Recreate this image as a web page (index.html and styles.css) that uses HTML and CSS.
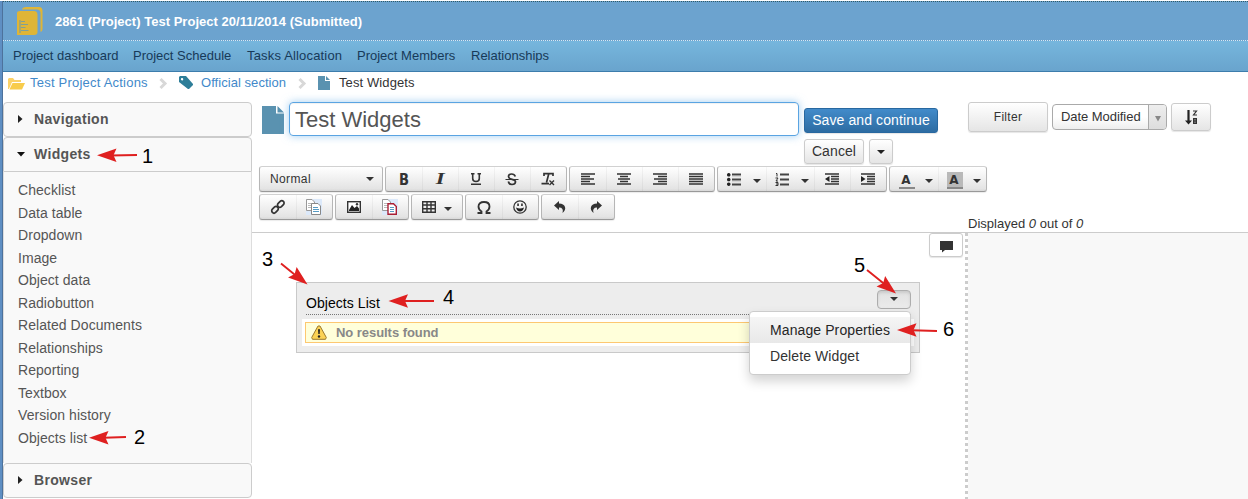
FILE: index.html
```html
<!DOCTYPE html>
<html lang="en">
<head>
<meta charset="utf-8">
<title>Test Widgets</title>
<link rel="stylesheet" href="styles.css">
</head>
<body>
<div class="app">
  <header class="header">
    <div class="titlebar">
      <svg class="book" width="26" height="29" viewBox="0 0 26 29"><path d="M5 2Q6 0 9 0H22Q25.500 0 25.500 4V22Q25.500 24.500 23.500 25V6Q23.500 2.500 20 2.500H5Z" fill="#dfb537"/><path d="M0 6Q0 4 3 4H17Q20.500 4 20.500 8V25Q20.500 28 17 28H0Z" fill="#dfb537"/><path d="M3 13V26M4 14.500H8M4 17.500H11M4 20.500H8.500M4 23.500H11.500" stroke="#7f9f98" stroke-width="1.200" fill="none"/></svg>
      <span>2861 (Project) Test Project 20/11/2014 (Submitted)</span>
    </div>
    <nav class="nav"><a>Project dashboard</a><a>Project Schedule</a><a class="tasks">Tasks Allocation</a><a>Project Members</a><a>Relationships</a></nav>
  </header>
  <div class="crumbs">
    <svg class="folder" width="17" height="13" viewBox="0 0 17 13"><path d="M0 12V2L1 1H5L6.500 3H13V5H4L1 12Z" fill="#fbd268"/><path d="M4.500 6H17L14 12.500H1.500Z" fill="#f8cc4c"/></svg>
    <a class="crumb-project">Test Project Actions</a>
    <svg class="chevron" width="9" height="11" viewBox="0 0 9 11"><path d="M1.500 1L6 5.500L1.500 10" stroke="#d8d8d8" stroke-width="3" fill="none"/></svg>
    <svg class="tag" width="15" height="14" viewBox="0 0 15 14"><path fill-rule="evenodd" d="M0 1L1 0H7L14 8V9L10 13H9L0 6ZM3 2A1.200 1.200 0 1 0 3.100 4.400A1.200 1.200 0 0 0 3 2Z" fill="#2e7e99"/></svg>
    <a class="crumb-section">Official section</a>
    <svg class="chevron second" width="9" height="11" viewBox="0 0 9 11"><path d="M1.500 1L6 5.500L1.500 10" stroke="#d8d8d8" stroke-width="3" fill="none"/></svg>
    <svg class="page" width="12" height="14" viewBox="0 0 12 14"><path d="M0 0H7V5H12V14H0ZM8 0L12 4H8Z" fill="#5a92b0"/></svg>
    <span class="crumb-current">Test Widgets</span>
  </div>
  <div class="columns">
    <aside class="sidebar">
      <div class="panel-head"><svg width="6" height="8"><path d="M0 0L4.500 4L0 8Z" fill="#222"/></svg>Navigation</div>
      <div class="panel-head open"><svg width="8" height="5"><path d="M-1 0H7L3 4.500Z" fill="#111"/></svg>Widgets</div>
      <ul class="widgets"><li>Checklist</li><li>Data table</li><li>Dropdown</li><li>Image</li><li>Object data</li><li>Radiobutton</li><li>Related Documents</li><li>Relationships</li><li>Reporting</li><li>Textbox</li><li>Version history</li><li>Objects list</li></ul>
      <div class="panel-head"><svg width="6" height="8"><path d="M0 0L4.500 4L0 8Z" fill="#222"/></svg>Browser</div>
    </aside>
    <main class="main">
      <div class="controls">
        <div class="edit-head">
          <div class="title-row">
            <svg class="doc" width="22" height="28" viewBox="0 0 22 28"><path d="M0 0H14V7.500H22V28H0ZM15.500 0L22 6.500H15.500Z" fill="#5a92b0"/></svg>
            <div class="title-input">Test Widgets</div>
            <div class="actions">
              <div class="btn save">Save and continue</div>
              <div class="btn cancel">Cancel</div>
              <div class="btn more"><svg width="8" height="4"><path d="M0 0H8L4 4Z" fill="#222"/></svg></div>
            </div>
          </div>
          <div class="toolbar">
            <div class="tool-row">
              <div class="group format"><span>Normal</span><svg width="8" height="4"><path d="M0 0H8L4 4Z" fill="#333"/></svg></div>
              <div class="group">
                <i class="tool"><b class="bold">B</b></i>
                <i class="tool"><b class="italic">I</b></i>
                <i class="tool"><svg width="12" height="13"><path d="M1 .7H4.500M7.500 .7H11M2.700 1V5.500Q2.700 8.500 6 8.500T9.300 5.500V1M1 11.200H11" stroke="#333" stroke-width="1.600" fill="none"/></svg></i>
                <i class="tool"><svg width="14" height="13"><path d="M10.300 3.500Q9.500 1 6.500 1Q3.500 1 3.500 3.500Q3.500 5.500 7 6.300Q10.700 7.200 10.500 9Q10.200 11.500 7 11.500Q4 11.500 3.300 8.500" stroke="#333" stroke-width="1.700" fill="none"/><path d="M.5 6.500H13.500" stroke="#333"/></svg></i>
                <i class="tool"><svg width="14" height="14"><path d="M3 4V1.700H12V4M7.700 2L5.500 10.500M.5 11.700H8" stroke="#333" stroke-width="1.700" fill="none"/><path d="M8.500 8.500L13 13M13 8.500L8.500 13" stroke="#333" stroke-width="1.400"/></svg></i>
              </div>
              <div class="group">
                <i class="tool"><svg width="14" height="12"><path d="M0 1H14M0 3.500H9M0 6H13M0 8.500H9M0 11H14" stroke="#333" stroke-width="1.500"/></svg></i>
                <i class="tool"><svg width="14" height="12"><path d="M0 1H14M3 3.500H11M1 6H13M3 8.500H11M0 11H14" stroke="#333" stroke-width="1.500"/></svg></i>
                <i class="tool"><svg width="14" height="12"><path d="M0 1H14M5 3.500H14M1 6H14M5 8.500H14M0 11H14" stroke="#333" stroke-width="1.500"/></svg></i>
                <i class="tool"><svg width="14" height="12"><path d="M0 1H14M0 3.500H14M0 6H14M0 8.500H14M0 11H14" stroke="#333" stroke-width="1.500"/></svg></i>
              </div>
              <div class="group">
                <i class="tool menu-tool"><svg width="14" height="13"><path d="M5 1.500H14M5 6.500H14M5 11.500H14" stroke="#444" stroke-width="2"/><path d="M5 3.700H14M5 8.700H14" stroke="#bbb" stroke-width=".6"/><path d="M1.800 0A1.800 1.800 0 1 1 1.700 0ZM1.800 4.700A1.800 1.800 0 1 1 1.700 4.700ZM1.800 9.400A1.800 1.800 0 1 1 1.700 9.400Z" fill="#222"/></svg><svg class="down" width="8" height="4"><path d="M0 0H8L4 4Z" fill="#333"/></svg></i>
                <i class="tool menu-tool"><svg width="14" height="13"><path d="M5 1.500H14M5 6.500H14M5 11.500H14" stroke="#444" stroke-width="2"/><path d="M1 .5H2V3.500M.5 5H3L1 8H3M.5 9.500H3V12.500H.5M1 11H3" stroke="#333" fill="none"/></svg><svg class="down" width="8" height="4"><path d="M0 0H8L4 4Z" fill="#333"/></svg></i>
                <i class="tool"><svg width="14" height="12"><path d="M0 1H14M6 3.500H14M6 6H14M6 8.500H14M0 11H14" stroke="#333" stroke-width="1.500"/><path d="M0 6L4.500 3V9Z" fill="#222"/></svg></i>
                <i class="tool"><svg width="14" height="12"><path d="M0 1H14M6 3.500H14M6 6H14M6 8.500H14M0 11H14" stroke="#333" stroke-width="1.500"/><path d="M4.500 6L0 3V9Z" fill="#222"/></svg></i>
              </div>
              <div class="group">
                <i class="tool menu-tool"><b class="color">A</b><svg class="down" width="8" height="4"><path d="M0 0H8L4 4Z" fill="#333"/></svg></i>
                <i class="tool menu-tool"><b class="color shade">A</b><svg class="down" width="8" height="4"><path d="M0 0H8L4 4Z" fill="#333"/></svg></i>
              </div>
            </div>
            <div class="tool-row">
              <div class="group">
                <i class="tool"><svg width="14" height="14" viewBox="0 0 14 14"><g fill="none" stroke="#333" stroke-width="1.700"><rect x="-3.700" y="-2.300" width="7.400" height="4.600" rx="2.300" transform="translate(4 9.800) rotate(-45)"/><rect x="-3.700" y="-2.300" width="7.400" height="4.600" rx="2.300" transform="translate(9.800 4) rotate(-45)"/></g></svg></i>
                <i class="tool"><svg width="16" height="16"><path d="M0 0H16V16H0Z" fill="#dce9fa"/><path d="M.5 .5H6L8.500 3V11.500H.5Z" fill="#fff" stroke="#999"/><path d="M2 4.500H6M2 6.500H6M2 8.500H6" stroke="#bbb"/><path d="M5.500 4.500H12L14.500 7V15.500H5.500Z" fill="#fff" stroke="#888"/><path d="M7 8.500H12M7 10.500H13M7 12.500H13" stroke="#579bc4"/></svg></i>
              </div>
              <div class="group">
                <i class="tool"><svg width="14" height="12"><rect x=".7" y=".7" width="12.600" height="10.600" fill="#fff" stroke="#333" stroke-width="1.400"/><path d="M2 9L5 4L7.500 7L10 5L12 7.500V10H2Z" fill="#222"/><circle cx="10" cy="3.300" r="1.200" fill="#333"/></svg></i>
                <i class="tool"><svg width="16" height="16"><path d="M0 0H16V16H0Z" fill="#dce9fa"/><path d="M.5 .5H6L8.500 3V11.500H.5Z" fill="#fff" stroke="#999"/><path d="M2 4.500H6M2 6.500H6M2 8.500H6" stroke="#bbb"/><path d="M6 4.700H11.500L14.300 7.500V15.300H6Z" fill="#fff" stroke="#a91f35" stroke-width="1.400"/><path d="M8 8.500H12M8 10.500H12M8 12.500H12" stroke="#579bc4"/></svg></i>
              </div>
              <div class="group">
                <i class="tool table-tool"><svg width="14" height="12"><path d="M.7 .7H13.300V11.300H.7ZM5 .5V11.500M9 .5V11.500M.5 4H13.500M.5 7.700H13.500" stroke="#333" stroke-width="1.400" fill="#eee"/></svg><svg class="down" width="8" height="4"><path d="M0 0H8L4 4Z" fill="#333"/></svg></i>
              </div>
              <div class="group">
                <i class="tool"><svg width="14" height="13"><path d="M.5 12H4.500V10.500Q1.500 8.500 1.500 5.500Q1.500 1 7 1T12.500 5.500Q12.500 8.500 9.500 10.500V12H13.500" stroke="#333" stroke-width="1.800" fill="none"/></svg></i>
                <i class="tool"><svg width="14" height="14"><circle cx="7" cy="7" r="6.200" fill="none" stroke="#333" stroke-width="1.300"/><path d="M3 7.500Q7 9.500 11 7.500Q10 11.500 7 11.500T3 7.500ZM4.300 3.500H5.800V6H4.300ZM8.200 3.500H9.700V6H8.200Z" fill="#222"/></svg></i>
              </div>
              <div class="group">
                <i class="tool"><svg width="12" height="12"><path d="M0 4.500L5 0V2.500Q10 2.500 11 6Q12 9 8.500 12Q10 6.500 5 6.500V9Z" fill="#333"/></svg></i>
                <i class="tool"><svg width="12" height="12"><path d="M12 4.500L7 0V2.500Q2 2.500 1 6Q0 9 3.500 12Q2 6.500 7 6.500V9Z" fill="#333"/></svg></i>
              </div>
            </div>
          </div>
        </div>
        <div class="filters">
          <div class="filter-row">
            <div class="btn filter">Filter</div>
            <div class="select"><span>Date Modified</span><i><svg width="6" height="6"><path d="M0 0H6L3 5.500Z" fill="#888"/></svg></i></div>
            <div class="btn sort"><svg width="13" height="15" viewBox="0 0 13 15"><path d="M3.500 0V12" stroke="#222" stroke-width="2.200"/><path d="M0 10.500H7L3.500 14.500Z" fill="#222"/><path d="M8 1H11.500L8.500 5H12" stroke="#333" stroke-width="1.200" fill="none"/><path d="M8.700 8.700H11.300V13.300H8.700ZM8.500 11H11" stroke="#333" stroke-width="1.400" fill="none"/></svg></div>
          </div>
          <div class="displayed">Displayed <em>0</em> out of <em>0</em></div>
        </div>
      </div>
      <div class="workspace">
        <section class="canvas">
          <div class="comment"><svg width="13" height="11"><path d="M0 0H13V9H5L2 11.500V9H0Z" fill="#333"/></svg></div>
          <div class="widget">
            <div class="widget-head"><span>Objects List</span><div class="widget-toggle"><svg width="8" height="4"><path d="M0 0H8L4 4Z" fill="#333"/></svg></div></div>
            <div class="result"><div class="notice">
              <svg width="16" height="15" viewBox="0 0 16 15"><path d="M7 1H9L15.300 12.500L14.500 14.300H1.500L.7 12.500Z" fill="#fbd254" stroke="#9c792c"/><path d="M7 4.500Q8 3.500 9 4.500L8.700 9H7.300Z" fill="#222"/><circle cx="8" cy="11.500" r="1.200" fill="#222"/></svg>
              <span>No results found</span></div></div>
            <div class="menu"><div class="active">Manage Properties</div><div>Delete Widget</div></div>
          </div>
        </section>
        <section class="list-pane"></section>
      </div>
    </main>
  </div>
</div>
<svg class="annotations" width="1248" height="499" viewBox="0 0 1248 499">
  <defs><path id="head" d="M0 0L19.500 -6.800L16.500 0L19.500 6.800Z" fill="#df2020"/></defs>
  <path d="M110 155.500L137 155M104 437.700L126 437M281 263.500L297 276.500M403 301H434M867 270L885 284.500M912 330.300L937 331" stroke="#df2020" stroke-width="1.900"/>
  <use href="#head" transform="translate(97 155.300)"/>
  <use href="#head" transform="translate(89 437.700)"/>
  <use href="#head" transform="translate(307.500 284.500) rotate(219)"/>
  <use href="#head" transform="translate(388.500 301)"/>
  <use href="#head" transform="translate(896 293.500) rotate(219)"/>
  <use href="#head" transform="translate(897 330)"/>
  <g class="numbers"><text x="142" y="163">1</text><text x="134" y="444">2</text><text x="262" y="266">3</text><text x="443" y="304">4</text><text x="854" y="272">5</text><text x="943" y="336">6</text></g>
</svg>
</body>
</html>
```
FILE: styles.css
```css
* { box-sizing: border-box; }
body { margin: 0; width: 1248px; height: 499px; overflow: hidden; position: relative; background: #fff; color: #333; font: 13px/16px "Liberation Sans", Arial, sans-serif; }
svg { display: block; flex: none; overflow: visible; }
.app { height: 499px; border-left: 2px solid #5f8fc3; box-shadow: inset 1px 0 #4d729c; padding-left: 1px; }
.header { margin-top: 1px; }
.titlebar { height: 40px; border-top: 1px dotted #315a66; border-bottom: 1px dotted #d7e8f3; background: #6ca3cf; display: flex; align-items: center; gap: 12px; padding: 1px 0 0 14px; color: #fff; font-weight: bold; letter-spacing: .02px; }
.nav { height: 31px; display: grid; grid-template-columns: 120px 114px 110px 114px auto; padding: 7px 10px 0; background: linear-gradient(#76b6dd, #69a4cd); border-bottom: 1px solid #3d7dac; color: #173a59; }
.tasks { letter-spacing: .17px; }
.crumbs { height: 30px; display: flex; align-items: flex-start; padding: 3px 0 0 5px; color: #333; }
.crumbs a { color: #4289ca; }
.folder { margin: 2px 5px 0 0; }
.crumb-project { width: 129px; letter-spacing: .22px; }
.chevron { margin: 3px 11px 0 0; }
.tag { margin: 1px 7px 0 0; }
.crumb-section { width: 97px; letter-spacing: .05px; }
.page { margin: 1px 9px 0 0; }
.crumb-current { letter-spacing: .1px; }
.columns { display: flex; height: 397px; }
.sidebar { width: 249px; flex: none; font-size: 14px; color: #555; }
.panel-head { height: 35px; border: 1px solid #ccc; border-radius: 4px; background: #f9f9f9; display: flex; align-items: center; padding: 0 0 1px 14px; color: #555; font-weight: bold; letter-spacing: .33px; }
.panel-head svg { width: 16px; }
.panel-head.open { border-radius: 4px 4px 0 0; }
.widgets { list-style: none; margin: 0; padding: 7px 14px 0; height: 291px; border: 1px solid #ddd; border-width: 0 1px; background: #f9f9f9; line-height: 22.500px; letter-spacing: .06px; }
.main { flex: 1; min-width: 0; }
.controls { height: 131px; border-bottom: 1px solid #ccc; display: flex; }
.edit-head { width: 716px; flex: none; padding-left: 7px; }
.title-row { display: flex; height: 64px; }
.doc { margin: 4px 5px 0 3px; }
.title-input { width: 510px; height: 34px; flex: none; border: 1px solid #5aa4e2; border-radius: 4px; box-shadow: 0 0 8px rgba(102,175,233,.6), inset 0 1px 1px rgba(0,0,0,.06); padding: 1px 5px 0; font-size: 22px; line-height: 32px; color: #555; }
.actions { margin: 6px 0 0 5px; width: 154px; display: flex; flex-wrap: wrap; gap: 6px 5px; align-content: flex-start; font-size: 14px; }
.btn { border: 1px solid #ccc; border-radius: 3px; background: linear-gradient(#fff, #e5e5e5); box-shadow: 0 1px 1px rgba(0,0,0,.1); display: flex; align-items: center; justify-content: center; }
.save { width: 134px; height: 25px; padding-bottom: 1px; color: #fff; letter-spacing: .1px; border-color: #2868a0; background: linear-gradient(#428bca, #2d6ca2); }
.cancel { width: 60px; height: 25px; padding-bottom: 1px; letter-spacing: .1px; }
.more { width: 24px; height: 25px; }
.toolbar { display: flex; flex-direction: column; gap: 2px; }
.tool-row { display: flex; gap: 2px; }
.group { flex: none; height: 26px; display: flex; border: 1px solid #b6b6b6; border-top-color: #d1d1d1; border-bottom-color: #999; border-radius: 3px; background: linear-gradient(#fff, #e4e4e4 90%, #d8d8d8); box-shadow: 0 1px 1px rgba(0,0,0,.08); }
.tool { width: 36px; display: flex; align-items: center; justify-content: center; font-style: normal; }
.tool + .tool { box-shadow: inset 1px 0 rgba(0,0,0,.04); }
.menu-tool { width: 48px; gap: 12px; padding-left: 4px; }
.table-tool { width: 50px; gap: 8px; }
.down { margin-top: 3px; }
.format { width: 124px; align-items: center; justify-content: space-between; padding: 0 8px 0 10px; font-size: 12px; letter-spacing: .38px; }
.bold { font: bold 16px "DejaVu Sans", sans-serif; transform: scaleX(.82); }
.italic { font: italic bold 17px "Liberation Serif", serif; transform: scaleX(1.350); }
.color { width: 16px; height: 17px; border-bottom: 2px solid #888; font: bold 12px/16px "DejaVu Sans", sans-serif; text-align: center; padding-right: 2px; margin-top: 2px; }
.menu-tool .color { margin-right: -2px; }
.shade { background: #b9b9b9; }
.filter-row { display: flex; height: 113px; align-items: flex-start; }
.filter { width: 80px; height: 30px; font-size: 12px; letter-spacing: .3px; }
.select { width: 115px; height: 26px; margin: 2px 4px 0; border: 1px solid #aaa; border-radius: 4px; display: flex; overflow: hidden; background: linear-gradient(#fff 50%, #eee); }
.select span { width: 95px; padding: 4px 0 0 8px; letter-spacing: -.05px; }
.select i { flex: 1; border-left: 1px solid #aaa; background: linear-gradient(#eee, #ddd); padding: 11px 0 0 6px; }
.sort { width: 40px; height: 28px; margin-top: 1px; }
.displayed { line-height: 17px; letter-spacing: .01px; }
.workspace { display: flex; height: 266px; }
.canvas { width: 713px; padding-left: 44px; }
.comment { width: 34px; height: 24px; margin-left: 633px; padding-top: 2px; border: 1px solid #ccc; border-radius: 3px; box-shadow: 0 1px 1px rgba(0,0,0,.1); display: flex; align-items: center; justify-content: center; background: #fff; }
.widget { position: relative; margin-top: 25px; width: 624px; height: 71px; border: 1px solid #c9c9c9; background: #ededed; padding: 7px 5px 0; color: #000; font-size: 14px; }
.widget-head { height: 25px; margin: 0 3px 0 4px; display: flex; justify-content: space-between; border-bottom: 1px dotted #777; }
.widget-head span { padding-top: 5px; letter-spacing: .06px; }
.widget-toggle { width: 34px; height: 19px; border: 1px solid #adadad; border-radius: 4px; background: linear-gradient(#e1e1e1, #ebebeb); box-shadow: inset 0 2px 3px rgba(0,0,0,.1); padding: 6px 12px; }
.result { margin-top: 4px; height: 27px; padding: 3px; background: #fff; }
.notice { height: 21px; display: flex; align-items: center; gap: 9px; padding-left: 5px; border: 1px solid #fdc871; background: #ffffda; color: #888; font-size: 13px; font-weight: bold; letter-spacing: -.05px; }
.menu { position: absolute; left: 452px; top: 28px; width: 162px; height: 64px; border: 1px solid #ccc; border-radius: 4px; background: #fff; box-shadow: 0 6px 12px rgba(0,0,0,.175); padding-top: 5px; color: #333; line-height: 26px; letter-spacing: .1px; }
.menu div { height: 26px; padding-left: 20px; }
.menu .active { background: linear-gradient(#f5f5f5, #e8e8e8); color: #262626; }
.list-pane { flex: 1; padding-left: 3px; background: repeating-linear-gradient(#ccc 0 3px, #fff 3px 6px) left / 3px 100% no-repeat, linear-gradient(#f8f8f8, #f8f8f8) content-box; }
.annotations { position: absolute; left: 0; top: 0; }
.numbers { font: 20px "Liberation Sans", Arial, sans-serif; fill: #000; }
```
